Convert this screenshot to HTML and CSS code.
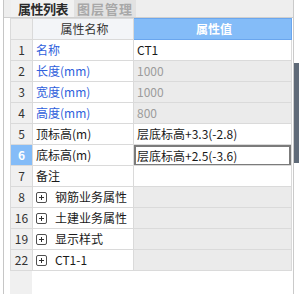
FILE: index.html
```html
<!DOCTYPE html>
<html lang="zh-CN">
<head>
    <meta charset="UTF-8">
    <meta name="viewport" content="width=device-width, initial-scale=1.0">
    <title>属性列表</title>
    <link rel="stylesheet" href="styles.css">
</head>
<body>

    <div class="panel">
        <div class="tabs">
            <span class="tab active">属性列表</span>
            <span class="tab">图层管理</span>
        </div>

        <div class="grid-wrap">
            <table class="grid">
                <colgroup>
                    <col class="col-num">
                    <col class="col-name">
                    <col class="col-value">
                </colgroup>
                <thead>
                    <tr>
                        <th class="num"></th>
                        <th>属性名称</th>
                        <th class="head-value">属性值</th>
                    </tr>
                </thead>
                <tbody>
                    <tr>
                        <td class="num">1</td>
                        <td class="blue">名称</td>
                        <td>CT1</td>
                    </tr>
                    <tr>
                        <td class="num">2</td>
                        <td class="blue">长度(mm)</td>
                        <td class="readonly">1000</td>
                    </tr>
                    <tr>
                        <td class="num">3</td>
                        <td class="blue">宽度(mm)</td>
                        <td class="readonly">1000</td>
                    </tr>
                    <tr>
                        <td class="num">4</td>
                        <td class="blue">高度(mm)</td>
                        <td class="readonly">800</td>
                    </tr>
                    <tr>
                        <td class="num">5</td>
                        <td>顶标高(m)</td>
                        <td>层底标高+3.3(-2.8)</td>
                    </tr>
                    <tr>
                        <td class="num selected">6</td>
                        <td>底标高(m)</td>
                        <td class="editing"><span class="edit-box">层底标高+2.5(-3.6)</span></td>
                    </tr>
                    <tr>
                        <td class="num">7</td>
                        <td>备注</td>
                        <td></td>
                    </tr>
                    <tr class="group">
                        <td class="num">8</td>
                        <td><span class="plus"></span>钢筋业务属性</td>
                        <td></td>
                    </tr>
                    <tr class="group">
                        <td class="num">16</td>
                        <td><span class="plus"></span>土建业务属性</td>
                        <td></td>
                    </tr>
                    <tr class="group">
                        <td class="num">19</td>
                        <td><span class="plus"></span>显示样式</td>
                        <td></td>
                    </tr>
                    <tr class="group">
                        <td class="num">22</td>
                        <td><span class="plus"></span>CT1-1</td>
                        <td></td>
                    </tr>
                </tbody>
            </table>
        </div>
    </div>

    <div class="splitter"></div>

</body>
</html>
```

FILE: styles.css
```css
body {
    margin: 0;
    padding: 0;
    width: 299px;
    height: 294px;
    overflow: hidden;
    background-color: #ffffff;
    font-family: "Noto Sans CJK SC", "Noto Sans", sans-serif;
    font-size: 12px;
    color: #1a1a1a;
    position: relative;
}

.panel {
    margin-left: 3px;
    width: 289px;
    height: 294px;
    border-left: 1px solid #c6c6c6;
    border-right: 1px solid #cacaca;
    display: flex;
    flex-direction: column;
}

/* pestañas */
.tabs {
    height: 17px;
    border-bottom: 1px solid #cfcfcf;
    background-color: #eeeeee;
    display: flex;
    padding-left: 7px;
}

.tab {
    font-size: 13px;
    line-height: 17px;
    padding: 0 3px 0 3px;
    color: #a8a8a8;
    font-weight: bold;
    letter-spacing: 1px;
    background-color: #e2e2e2;
}

.tab.active {
    color: #2b2b2b;
    background-color: #f1f1f1;
    letter-spacing: -0.5px;
    padding: 0 6px 0 7px;
}

/* tabla */
.grid-wrap {
    flex: 1;
    padding-left: 6px;
    background: linear-gradient(to right, #ffffff 6px, #f0f0f0 6px, #f0f0f0 28px, #ffffff 28px);
}

.grid {
    width: 282px;
    table-layout: fixed;
    border-collapse: collapse;
    background-color: #ffffff;
}

.col-num {
    width: 22px;
}

.col-name {
    width: 101px;
}

.grid th,
.grid td {
    height: 20px;
    padding: 0 0 0 3px;
    border: 1px solid #dadada;
    white-space: nowrap;
    overflow: hidden;
    text-align: left;
    font-weight: normal;
    line-height: 20px;
}

.grid th {
    background-color: #f3f5f8;
    text-align: center;
    color: #333;
}

.grid th.head-value {
    background-color: #84bcf8;
    border: 1px solid #6aa6ee;
    color: #ffffff;
    font-weight: bold;
}

.grid .num {
    background-color: #f0f0f0;
    text-align: center;
    padding: 0;
    color: #333;
}

.grid .num.selected {
    background-color: #84bcf8;
    color: #ffffff;
    font-weight: bold;
}

.blue {
    color: #2f5fdc;
}

.readonly {
    background-color: #ebebeb;
    color: #9c9c9c;
}

.group td:last-child {
    background-color: #ebebeb;
}

.editing {
    position: relative;
}

.edit-box {
    position: absolute;
    left: 0;
    top: 0;
    right: 0;
    bottom: -1px;
    border: 2px solid #7b7b7b;
    padding-left: 1px;
    line-height: 17px;
}

/* caja + */
.plus {
    display: inline-block;
    position: relative;
    width: 9px;
    height: 9px;
    border: 1px solid #505050;
    border-radius: 2px;
    margin: 0 8px 0 0;
    vertical-align: -1px;
}

.plus::before,
.plus::after {
    content: "";
    position: absolute;
    background-color: #303030;
}

.plus::before {
    left: 2px;
    top: 4px;
    width: 5px;
    height: 1px;
}

.plus::after {
    left: 4px;
    top: 2px;
    width: 1px;
    height: 5px;
}

/* barra lateral */
.splitter {
    position: absolute;
    right: 0;
    top: 63px;
    width: 5px;
    height: 100px;
    background-color: #5f6a78;
}
```
